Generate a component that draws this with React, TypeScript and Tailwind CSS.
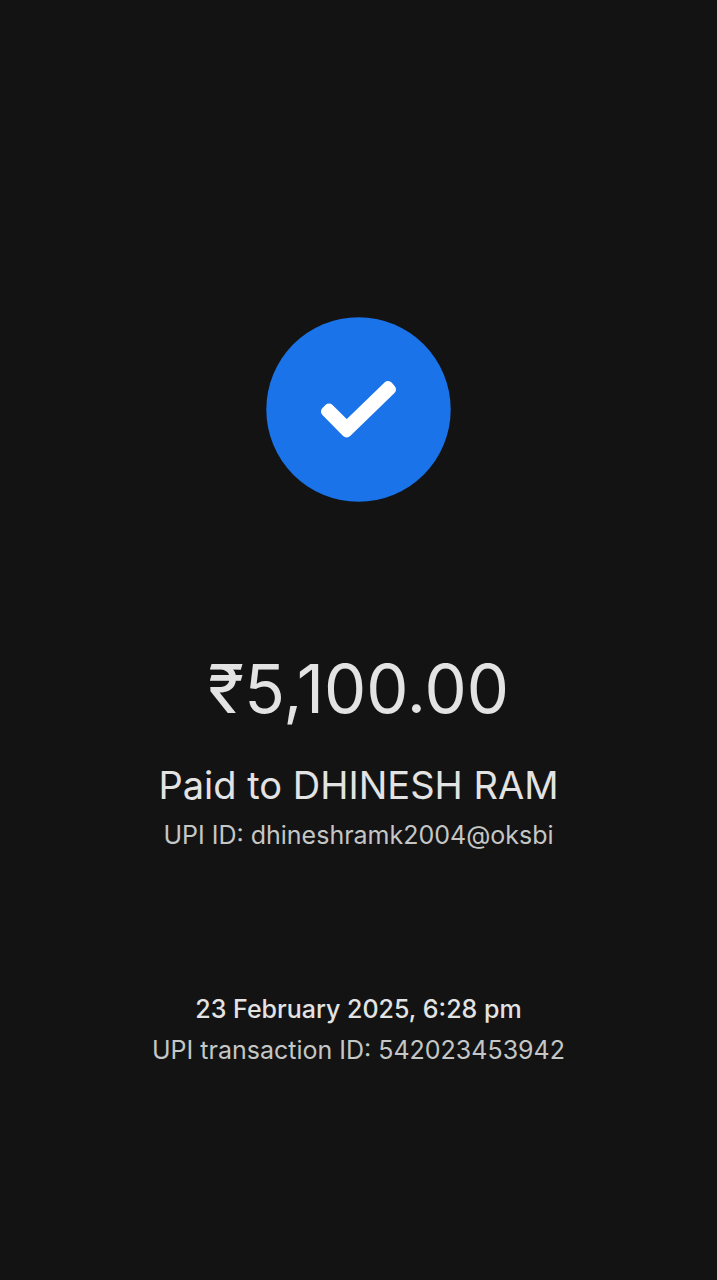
export default function App() {
  return (
    <main className="flex min-h-screen flex-col items-center bg-[#131313] px-4 pt-[317px] pb-16 text-center font-['Inter',sans-serif] text-[#e3e3e3]">
      <svg viewBox="0 0 185 185" className="size-[185px]" role="img" aria-label="Payment successful">
        <circle cx="92.5" cy="92.5" r="92.2" fill="#1a73e8" />
        <path d="M60 94.5 L63 91.5 L80.7 109 L122 69 L125 72.5 L80.7 115.5 Z" fill="#fff" stroke="#fff" strokeWidth="10" strokeLinejoin="round" />
      </svg>
      <h1 className="mt-[147px] text-[67px] leading-[80px]">₹5,100.00</h1>
      <p className="mt-8 text-[38px] leading-[48px]">Paid to DHINESH RAM</p>
      <p className="mt-[10px] text-[25px] leading-[33px] text-[#c4c7c5]">UPI ID: dhineshramk2004@oksbi</p>
      <p className="mt-[141px] text-[25px] leading-[33px] font-medium">23 February 2025, 6:28 pm</p>
      <p className="mt-2 text-[25px] leading-[33px] text-[#c4c7c5]">UPI transaction ID: 542023453942</p>
    </main>
  );
}
